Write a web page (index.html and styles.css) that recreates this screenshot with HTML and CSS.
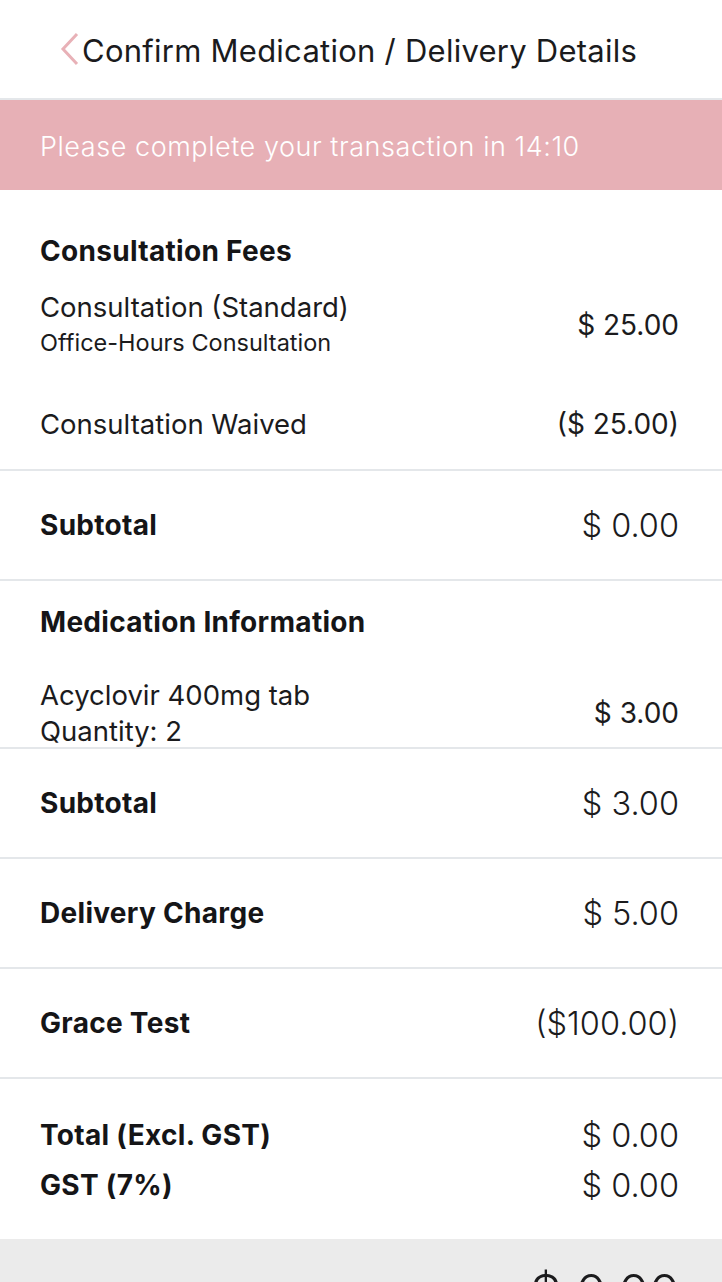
FILE: index.html
```html
<!DOCTYPE html>
<html>
<head>
<meta charset="utf-8">
<link rel="stylesheet" href="styles.css">
</head>
<body>
<header class="topbar">
  <svg class="back" width="20" height="34" viewBox="0 0 20 34"><polyline points="17,2 3,17 17,32" fill="none" stroke="#e8b1b7" stroke-width="3"/></svg>
  <h1 class="title">Confirm Medication / Delivery Details</h1>
</header>
<div class="banner">Please complete your transaction in 14:10</div>

<section class="block fees">
  <h2 class="heading">Consultation Fees</h2>
  <div class="row row-item1">
    <div class="label">
      <div class="line">Consultation (Standard)</div>
      <div class="sub">Office-Hours Consultation</div>
    </div>
    <div class="amount">$ 25.00</div>
  </div>
  <div class="row row-item2">
    <div class="label"><div class="line">Consultation Waived</div></div>
    <div class="amount">($ 25.00)</div>
  </div>
</section>

<div class="row sum"><div class="bold">Subtotal</div><div class="big">$ 0.00</div></div>

<section class="block meds">
  <h2 class="heading">Medication Information</h2>
  <div class="row row-med">
    <div class="label">
      <div class="line">Acyclovir 400mg tab</div>
      <div class="line">Quantity: 2</div>
    </div>
    <div class="amount">$ 3.00</div>
  </div>
</section>

<div class="row sum"><div class="bold">Subtotal</div><div class="big">$ 3.00</div></div>
<div class="row sum"><div class="bold">Delivery Charge</div><div class="big">$ 5.00</div></div>
<div class="row sum"><div class="bold">Grace Test</div><div class="big">($100.00)</div></div>

<section class="totals">
  <div class="trow"><div class="bold">Total (Excl. GST)</div><div class="big">$ 0.00</div></div>
  <div class="trow"><div class="bold">GST (7%)</div><div class="big">$ 0.00</div></div>
</section>

<footer class="footer"><div class="grand">$ 0.00</div></footer>
</body>
</html>
```

FILE: styles.css
```css
* { box-sizing: border-box; margin: 0; padding: 0; }
html, body { background: #fff; }
body {
  width: 722px;
  height: 1282px;
  overflow: hidden;
  font-family: Inter, Roboto, "Liberation Sans", sans-serif;
  color: #1b1b1d;
}
.topbar {
  height: 100px;
  border-bottom: 2px solid #e4e7ea;
  display: flex;
  align-items: center;
  padding-left: 60px;
  padding-top: 2px;
}
.back { display: block; margin-right: 2px; margin-top: -2px; }
.title {
  font-weight: 400;
  font-size: 31px;
  letter-spacing: 0.25px;
  color: #1b1b1d;
}
.banner {
  height: 90px;
  background: #e7b0b6;
  color: #fff;
  display: flex;
  align-items: center;
  padding-left: 40px;
  padding-top: 2px;
  font-size: 27px;
  letter-spacing: 0.55px;
  font-weight: 300;
}
.block { padding: 0 43px 0 40px; border-bottom: 2px solid #e4e7ea; }
.fees { padding-top: 40px; height: 281px; }
.meds { padding-top: 20px; height: 168px; }
.heading { font-size: 28px; letter-spacing: 0.3px; font-weight: 700; height: 42px; display: flex; align-items: center; color: #151517; }
.row { display: flex; justify-content: space-between; align-items: center; }
.row-item1 { height: 106px; }
.row-item2 { height: 92px; }
.row-med { margin-top: 33px; height: 73px; }
.line { font-size: 27.5px; line-height: 36px; }
.sub { font-size: 23.5px; line-height: 36px; }
.amount { font-size: 28px; font-weight: 400; }
.sum { height: 110px; padding: 0 43px 0 40px; border-bottom: 2px solid #e4e7ea; }
.bold { font-size: 28px; letter-spacing: 0.3px; font-weight: 700; color: #151517; }
.big { font-size: 32.5px; font-weight: 300; }
.totals { padding: 36px 43px 34px 40px; height: 160px; display: flex; flex-direction: column; gap: 10px; }
.trow { display: flex; justify-content: space-between; align-items: center; height: 40px; }
.footer {
  background: #ebebeb;
  height: 200px;
  display: flex;
  justify-content: flex-end;
  padding: 24px 42px 0 0;
}
.grand { font-size: 50px; font-weight: 300; }
```
